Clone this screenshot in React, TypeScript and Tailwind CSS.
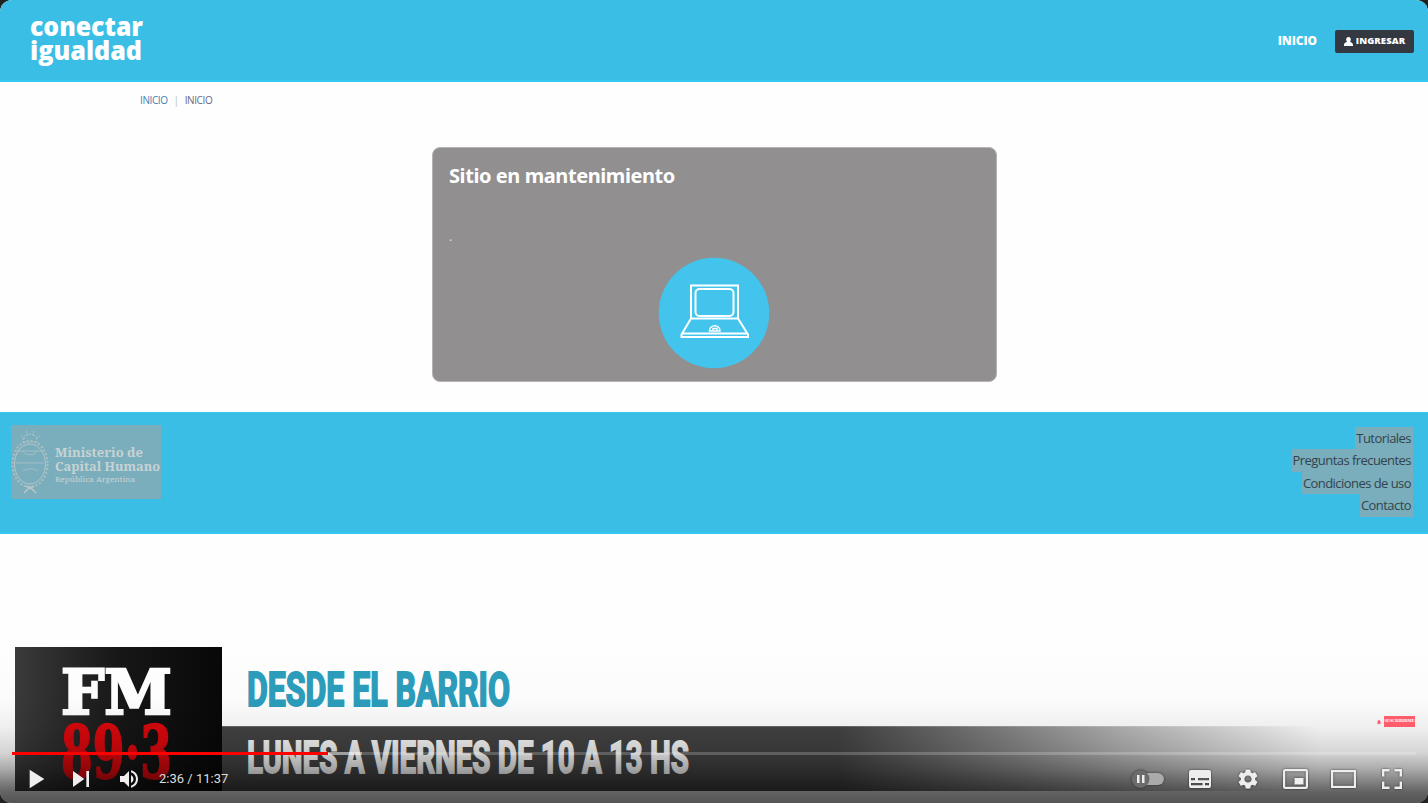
import React from "react";
import { MdPlayArrow, MdSkipNext, MdVolumeUp, MdSettings, MdNotifications } from "react-icons/md";

function SiteHeader() {
  return (
    <header className="flex h-[82px] shrink-0 items-center justify-between border-b-2 border-[#35c9f2] bg-[#3bbee5] pl-[30px] pr-[14px] pt-[2px]">
      <svg className="overflow-visible" width="118" height="58" viewBox="0 0 118 58" fill="#fff" fontFamily="'Open Sans', 'Noto Sans', sans-serif" fontWeight="800" fontSize="26">
        <text x="0" y="24" textLength="113" lengthAdjust="spacingAndGlyphs">conectar</text>
        <text x="0" y="47.500" textLength="112" lengthAdjust="spacingAndGlyphs">igualdad</text>
      </svg>
      <nav className="flex items-center gap-[18px] font-['Open_Sans',sans-serif] font-extrabold text-white">
        <a className="text-[12px] leading-none tracking-[-0.1px]">INICIO</a>
        <a className="flex h-[23px] w-[79px] items-center justify-center gap-[3px] rounded-[2px] bg-[#343840] text-[9.5px] leading-none tracking-[0.1px]">
          <svg width="9" height="9" viewBox="0 0 9 9" fill="currentColor">
            <path d="M4.500 0C6 0 6.800 1 6.800 2.500C6.800 3.700 6.300 4.500 6 4.900C7.500 5.200 9 6 9 8V9H0V8C0 6 1.500 5.200 3 4.900C2.700 4.500 2.200 3.700 2.200 2.500C2.200 1 3 0 4.500 0Z" />
          </svg>
          INGRESAR
        </a>
      </nav>
    </header>
  );
}

function Laptop() {
  return (
    <svg width="112" height="112" viewBox="0 0 112 112" fill="none">
      <circle cx="56" cy="56" r="55.3" fill="#42c4ec" />
      <g stroke="#fff" strokeWidth="2">
        <path d="M33 62V28.500H80V62" />
        <rect x="37.500" y="32" width="38" height="27" rx="4" />
        <path d="M33 61.500H80L90 77.500V80H23.500V77.500ZM23.500 76.500H90" />
        <path d="M51.500 74C51.500 67 62 67 62 74ZM55 73V71.500H59V73" strokeWidth="1.500" />
      </g>
    </svg>
  );
}

function Crest() {
  return (
    <svg width="38" height="66" viewBox="0 0 38 66" fill="none" stroke="#b7c4c6">
      <ellipse cx="19" cy="35" rx="15.500" ry="20" strokeWidth="1" />
      <ellipse cx="19" cy="35" rx="17.500" ry="23" strokeWidth="2" strokeDasharray="2 2" opacity=".8" />
      <path d="M5 34H33M6 22H32M12 22C14 27 23 27 26 22M12 42C17 39 22 39 27 42" opacity=".7" />
      <path d="M12 11C12 3 26 3 26 11M14 10L9 6M17 7L15 1M22 7L23 1M25 10L30 6M11 13H27" strokeDasharray="2 1" opacity=".8" />
      <path d="M13 64L19 58L25 64M15 57L23 61M23 57L15 61" strokeWidth="1.500" />
    </svg>
  );
}

function SiteFooter() {
  return (
    <footer className="flex h-[122px] shrink-0 justify-between border-b-2 border-t border-[#35c9f2] bg-[#3bbee5] pl-[11px] pr-[15px]">
      <div className="mt-[12px] flex h-[74px] w-[150px] items-center bg-[#7aaebd]">
        <Crest />
        <svg className="shrink-0 overflow-visible" width="112" height="50" viewBox="0 0 112 50" fill="#c8d2d3" fontFamily="'Noto Serif', 'DejaVu Serif', 'Liberation Serif', serif" fontWeight="700">
          <text x="6" y="20" fontSize="12" textLength="88" lengthAdjust="spacingAndGlyphs">Ministerio de</text>
          <text x="6" y="33.500" fontSize="12" textLength="105" lengthAdjust="spacingAndGlyphs">Capital Humano</text>
          <text x="6" y="45" fontSize="7.500" fontWeight="400" textLength="80" lengthAdjust="spacingAndGlyphs">República Argentina</text>
        </svg>
      </div>
      <ul className="mt-[14px] flex flex-col items-end font-['Open_Sans',sans-serif] text-[13px] leading-[22.4px] tracking-[-0.55px] text-[#33434c]">
        <li className="bg-[#7aaebd] pl-px pr-[2px]">Tutoriales</li>
        <li className="bg-[#7aaebd] pl-px pr-[2px]">Preguntas frecuentes</li>
        <li className="bg-[#7aaebd] pl-px pr-[2px]">Condiciones de uso</li>
        <li className="bg-[#7aaebd] pl-px pr-[2px]">Contacto</li>
      </ul>
    </footer>
  );
}

function Banner() {
  return (
    <section className="mt-[113px] flex h-[144px] shrink-0 pl-[15px]">
      <div className="w-[207px] bg-linear-to-r from-[#3b3b3b] via-[#171717] to-[#080808]">
        <svg className="overflow-visible" width="207" height="144" viewBox="0 0 207 144" fontFamily="'DejaVu Serif', 'Liberation Serif', serif" fontWeight="700">
          <text x="46" y="67" fontSize="62" fill="#fff" stroke="#fff" strokeWidth="2.500" textLength="111" lengthAdjust="spacingAndGlyphs">FM</text>
          <text x="46" y="131" fontSize="73" fill="#d8080d" stroke="#d8080d" strokeWidth="2" textLength="111" lengthAdjust="spacingAndGlyphs">89·3</text>
        </svg>
      </div>
      <div className="flex flex-1 flex-col">
        <svg className="shrink-0" width="480" height="79" viewBox="0 0 480 79" fontFamily="Roboto, sans-serif" fontWeight="700">
          <text x="25" y="58.500" fontSize="48" fill="#2c9dbc" stroke="#2c9dbc" strokeWidth="2" textLength="263" lengthAdjust="spacingAndGlyphs">DESDE EL BARRIO</text>
        </svg>
        <div className="flex-1 border-t border-white/20 bg-linear-to-r from-[#424242] from-[51%] via-[#b5b5b5] via-[75%] to-[#ffffff] to-[91%]">
          <svg width="480" height="64" viewBox="0 0 480 64" fontFamily="Roboto, sans-serif" fontWeight="700">
            <text x="25" y="46" fontSize="45" fill="#f5f5f5" stroke="#f5f5f5" strokeWidth="1.800" textLength="442" lengthAdjust="spacingAndGlyphs">LUNES A VIERNES DE 10 A 13 HS</text>
          </svg>
        </div>
      </div>
    </section>
  );
}

function Cell({ children }: { children: React.ReactNode }) {
  return <button className="flex w-12 items-center justify-center">{children}</button>;
}

function Controls() {
  return (
    <div className="absolute inset-x-0 bottom-0 flex h-[163px] flex-col justify-end bg-[linear-gradient(to_bottom,rgba(0,0,0,0)_0px,rgba(0,0,0,0.01)_60px,rgba(0,0,0,0.06)_87px,rgba(0,0,0,0.17)_113px,rgba(0,0,0,0.34)_130px,rgba(0,0,0,0.47)_140px,rgba(0,0,0,0.61)_152px,rgba(0,0,0,0.67)_163px)] px-3">
      <div className="mb-[25px] mr-px flex items-center gap-[2px] self-end text-[#ff5c6c]">
        <MdNotifications size={6} className="shrink-0" />
        <span className="flex h-[11px] w-[31px] shrink-0 items-center justify-center bg-[#ff5c6c] font-['Liberation_Serif',serif] text-[4.5px] font-bold leading-none tracking-[-0.15px] text-white">SUSCRIBIRME</span>
      </div>
      <div className="flex h-[3px] shrink-0 bg-white/20">
        <div className="w-[316px] bg-[#ff0000]" />
        <div className="w-[34px] bg-white/40" />
      </div>
      <div className="flex h-[48px] shrink-0 items-center justify-between text-[#eeeeee]">
        <div className="flex items-center">
          <button className="flex w-[45px] justify-center"><MdPlayArrow size={32} /></button>
          <button className="flex w-[48px] justify-center"><MdSkipNext size={32} /></button>
          <button className="flex w-[47px] justify-center"><MdVolumeUp size={24} /></button>
          <span className="ml-[7px] font-['Roboto',sans-serif] text-[13px] text-[#dddddd]">2:36 / 11:37</span>
        </div>
        <div className="flex items-center drop-shadow-[0_0_1px_rgba(0,0,0,0.6)]">
          <button className="mr-[11px] flex">
            <svg width="34" height="20" viewBox="0 0 34 20">
              <rect x="8" y="4" width="25" height="12" rx="6" fill="#aaa" />
              <circle cx="9.500" cy="10" r="9" fill="#6b6b6b" />
              <path d="M6 6h2.500v8H6zM11 6h2.500v8H11z" fill="#eee" />
            </svg>
          </button>
          <Cell>
            <svg width="22" height="18" viewBox="0 0 22 18" fill="currentColor">
              <path fillRule="evenodd" d="M2 0H20Q22 0 22 2V16Q22 18 20 18H2Q0 18 0 16V2Q0 0 2 0ZM2 8V10.200H6V8ZM9 8V10.200H20V8ZM2 13V15.200H13.500V13ZM16 13V15.200H20V13Z" />
            </svg>
          </Cell>
          <Cell><MdSettings size={24} /></Cell>
          <Cell>
            <svg width="26" height="20" viewBox="0 0 26 20" fill="none">
              <rect x="1.100" y="1.100" width="22.800" height="17.800" rx="1.200" stroke="currentColor" strokeWidth="2.200" />
              <path d="M11.500 9H20.500V15.500H11.500Z" fill="currentColor" />
            </svg>
          </Cell>
          <Cell>
            <svg width="26" height="18" viewBox="0 0 26 18" fill="none" stroke="currentColor" strokeWidth="2.200">
              <rect x="1.100" y="1.100" width="22.800" height="15.800" />
            </svg>
          </Cell>
          <Cell>
            <svg width="20" height="20" viewBox="0 0 20 20" fill="none" stroke="currentColor" strokeWidth="2.400">
              <path d="M1.200 7.500V1.200H7.500M12.500 1.200H18.800V7.500M18.800 12.500V18.800H12.500M7.500 18.800H1.200V12.500" />
            </svg>
          </Cell>
        </div>
      </div>
    </div>
  );
}

export default function App() {
  return (
    <main className="h-[803px] w-[1428px] bg-[#212121]">
      <div className="relative flex h-full flex-col overflow-hidden rounded-[12px] bg-[#fefefe]">
        <SiteHeader />
        <div className="flex h-[65px] shrink-0 gap-[6px] pl-[140px] pt-[11px] font-['Open_Sans',sans-serif] text-[10px] leading-[14px] tracking-[-0.4px] text-[#6b6680]">
          <span className="text-[#3c82b4]">INICIO</span>
          <span className="text-[#bbbbbb]">|</span>
          <span>INICIO</span>
        </div>
        <section className="ml-[432px] flex h-[235px] w-[565px] shrink-0 flex-col rounded-[8px] border border-[#b5b3b4] bg-[#918f90] px-4 pt-[12px] font-['Noto_Sans',sans-serif] text-white">
          <h1 className="text-[20px] font-bold leading-[32px] tracking-[-0.42px]">Sitio en mantenimiento</h1>
          <p className="mt-[37px] text-[12px] leading-[16px] text-[#dddddd]">.</p>
          <div className="mt-[12px] flex justify-center pr-px"><Laptop /></div>
        </section>
        <div className="h-[30px] shrink-0" />
        <SiteFooter />
        <Banner />
        <Controls />
      </div>
    </main>
  );
}
